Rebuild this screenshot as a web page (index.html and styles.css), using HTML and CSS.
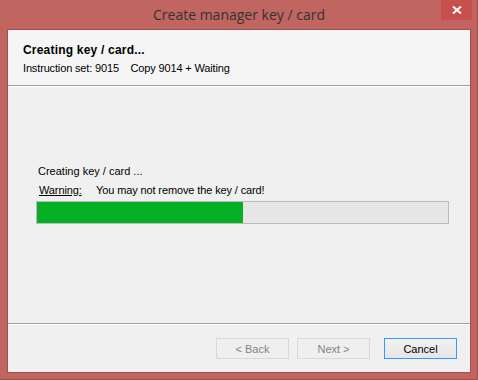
FILE: index.html
```html
<!DOCTYPE html>
<html lang="en">
<head>
  <meta charset="UTF-8">
  <title>Create manager key / card</title>
  <link rel="stylesheet" href="styles.css">
</head>
<body>
  <div class="window">
    <div class="title-bar">
      <span class="title">Create manager key / card</span>
      <button class="close-btn">
        <svg width="10" height="8" viewBox="0 0 10 8"><path d="M1 0.5 L9 7.5 M9 0.5 L1 7.5" stroke="#fff" stroke-width="2"/></svg>
      </button>
    </div>

    <div class="client">
      <div class="header">
        <div class="header-title">Creating key / card...</div>
        <div class="header-sub">Instruction set: 9015&nbsp;&nbsp;&nbsp;&nbsp;Copy 9014 + Waiting</div>
      </div>

      <div class="content">
        <div class="status">Creating key / card ...</div>
        <div class="warning">
          <span class="warning-label">Warning:</span>
          <span>You may not remove the key / card!</span>
        </div>
        <div class="progress">
          <div class="progress-fill" style="width: 50%"></div>
        </div>
      </div>

      <div class="footer">
        <button class="btn" disabled>&lt; Back</button>
        <button class="btn" disabled>Next &gt;</button>
        <button class="btn btn-default">Cancel</button>
      </div>
    </div>
  </div>
</body>
</html>
```

FILE: styles.css
```css
:root {
  --frame: #c06560;
  --frame-edge: #a0504c;
  --header-bg: #f5f5f5;
  --body-bg: #f0f0f0;
  --text: #000;
}

body {
  margin: 0;
  padding: 0;
  background: var(--frame);
  font-family: 'Liberation Sans', Arial, sans-serif;
  font-size: 11px;
  color: var(--text);
}

.window {
  width: 478px;
  height: 380px;
  box-sizing: border-box;
  background: var(--frame);
  border-right: 1px solid var(--frame-edge);
  border-bottom: 1px solid var(--frame-edge);
  display: flex;
  flex-direction: column;
  padding: 0 6px 6px 7px;
}

.title-bar {
  height: 29px;
  display: flex;
  justify-content: center;
  position: relative;
}

.title {
  font-family: 'Open Sans', 'Segoe UI', sans-serif;
  font-size: 14px;
  color: #333;
  line-height: 30px;
}

.close-btn {
  position: absolute;
  top: 0;
  right: -1px;
  width: 31px;
  height: 20px;
  border: none;
  background: #c7504c;
  display: flex;
  align-items: center;
  justify-content: center;
  padding: 0;
}

.client {
  flex: 1;
  border: 1px solid var(--frame-edge);
  background: var(--body-bg);
  display: flex;
  flex-direction: column;
}

.header {
  height: 56px;
  background: var(--header-bg);
  border-bottom: 1px solid #a0a0a0;
  box-shadow: 0 1px 0 #fff;
  padding: 13px 0 0 15px;
  box-sizing: border-box;
}

.header-title {
  font-weight: bold;
  font-size: 12px;
  letter-spacing: 0.2px;
  line-height: 14px;
}

.header-sub {
  margin-top: 4px;
  line-height: 14px;
  letter-spacing: -0.15px;
}

.content {
  flex: 1;
  padding: 78px 20px 0 28px;
  border-bottom: 1px solid #a0a0a0;
  box-shadow: 0 1px 0 #fff;
}

.status {
  line-height: 14px;
  margin-left: 2px;
}

.warning {
  margin: 5px 0 0 3px;
  line-height: 14px;
  display: flex;
  letter-spacing: -0.12px;
}

.warning-label {
  text-decoration: underline;
  width: 57px;
}

.progress {
  margin-top: 4px;
  height: 23px;
  box-sizing: border-box;
  border: 1px solid #bcbcbc;
  background: #e6e6e6;
  width: 413px;
}

.progress-fill {
  height: 100%;
  background: #06b025;
}

.footer {
  height: 48px;
  display: flex;
  justify-content: flex-end;
  align-items: flex-start;
  padding: 14px 13px 0 0;
  box-sizing: border-box;
  gap: 8px;
}

.btn {
  width: 73px;
  height: 21px;
  font-family: 'Liberation Sans', Arial, sans-serif;
  font-size: 11px;
  background: #ececec;
  border: 1px solid #adadad;
  color: #000;
  padding: 0;
}

.btn:disabled {
  border-color: #d9d9d9;
  background: #efefef;
  color: #838383;
}

.btn-default {
  margin-left: 6px;
  border-color: #3399ff;
  background: linear-gradient(#f2f2f2, #e5e5e5);
}
```
